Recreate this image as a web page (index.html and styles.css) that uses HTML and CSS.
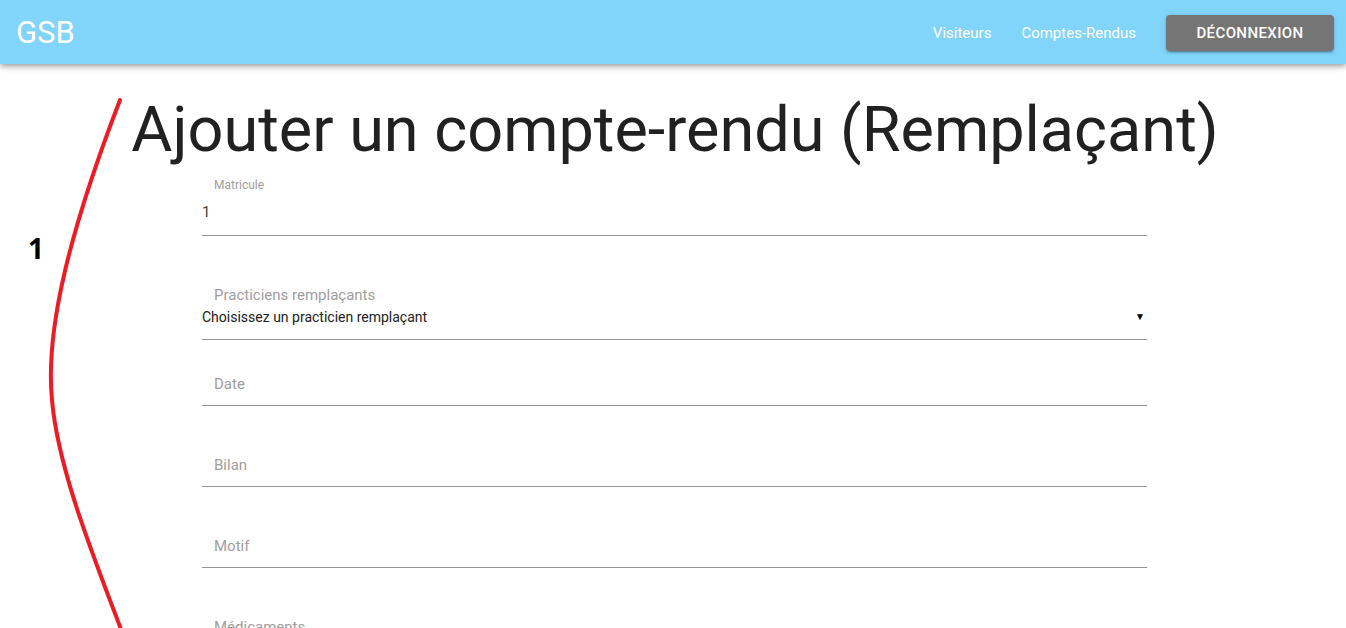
FILE: index.html
```html
<!DOCTYPE html>
<html lang="fr">
<head>
<meta charset="utf-8">
<title>GSB - Ajouter un compte-rendu</title>
<link rel="stylesheet" href="styles.css">
</head>
<body>
<header class="appbar">
  <div class="brand">GSB</div>
  <nav class="nav">
    <a class="nav-link" href="#">Visiteurs</a>
    <a class="nav-link" href="#">Comptes-Rendus</a>
    <button class="logout" type="button">Déconnexion</button>
  </nav>
</header>
<main class="page">
  <h1 class="title">Ajouter un compte-rendu (Remplaçant)</h1>
  <form class="form">
    <div class="field field--shrink">
      <label class="label label--small">Matricule</label>
      <div class="value">1</div>
    </div>
    <div class="field field--select">
      <label class="label">Practiciens remplaçants</label>
      <div class="select">
        <span>Choisissez un practicien remplaçant</span>
        <span class="arrow">▼</span>
      </div>
    </div>
    <div class="field field--text field--first">
      <label class="label">Date</label>
    </div>
    <div class="field field--text">
      <label class="label">Bilan</label>
    </div>
    <div class="field field--text">
      <label class="label">Motif</label>
    </div>
    <div class="field field--text">
      <label class="label">Médicaments</label>
    </div>
  </form>
</main>
<div class="annotation-num">1</div>
<svg class="annotation-curve" width="1346" height="628" viewBox="0 0 1346 628">
  <path d="M120,100 C70,230 45,330 52,400 C58,470 95,560 122,632" fill="none" stroke="#ed1c24" stroke-width="4" stroke-linecap="round"/>
</svg>
</body>
</html>
```

FILE: styles.css
```css
html, body {
  margin: 0;
  padding: 0;
  background: #ffffff;
  font-family: Roboto, "Liberation Sans", sans-serif;
  overflow: hidden;
  height: 628px;
}

.appbar {
  height: 64px;
  background: #81d4fa;
  display: flex;
  align-items: center;
  justify-content: space-between;
  padding: 0 12px 0 16px;
  box-shadow: 0 2px 4px -1px rgba(0,0,0,0.2), 0 4px 5px 0 rgba(0,0,0,0.14), 0 1px 10px 0 rgba(0,0,0,0.12);
  position: relative;
  z-index: 1;
}

.brand {
  color: #ffffff;
  font-size: 31px;
  font-weight: 400;
  line-height: 1;
}

.nav {
  display: flex;
  align-items: center;
  gap: 30px;
  padding-top: 2px;
}

.nav-link {
  color: #ffffff;
  text-decoration: none;
  font-size: 15px;
  font-weight: 400;
}

.logout {
  background: #757575;
  color: #ffffff;
  border: none;
  border-radius: 4px;
  height: 36px;
  width: 168px;
  padding: 0;
  font-family: Roboto, "Liberation Sans", sans-serif;
  font-size: 15px;
  font-weight: 500;
  letter-spacing: 0.4px;
  text-transform: uppercase;
  box-shadow: 0 3px 1px -2px rgba(0,0,0,0.2), 0 2px 2px 0 rgba(0,0,0,0.14), 0 1px 5px 0 rgba(0,0,0,0.12);
}

.page {
  display: flex;
  flex-direction: column;
}

.title {
  margin: 28px 0 0 0;
  padding-left: 4px;
  font-size: 63px;
  line-height: 76px;
  font-weight: 400;
  color: #212121;
  text-align: center;
}

.form {
  width: 945px;
  margin-left: 202px;
  display: flex;
  flex-direction: column;
}

.field {
  display: flex;
  flex-direction: column;
  border-bottom: 1px solid #959595;
}

.label {
  display: block;
  padding-left: 12px;
  color: #9e9e9e;
  font-size: 15px;
  line-height: 20px;
}

.label--small {
  font-size: 12px;
  line-height: 14px;
}

.field--shrink {
  padding: 10px 0 13px 0;
  height: 44px;
  gap: 10px;
}

.value {
  font-size: 15px;
  line-height: 20px;
  color: #4a4030;
}

.field--select {
  padding: 49px 0 13px 0;
  gap: 3px;
}

.select {
  display: flex;
  justify-content: space-between;
  align-items: center;
  font-size: 14px;
  line-height: 18px;
  color: #212121;
}

.arrow {
  font-size: 10px;
  padding-right: 2px;
  color: #000000;
}

.field--text {
  padding: 49px 0 11px 0;
}

.field--first {
  padding-top: 34px;
}

.annotation-num {
  position: absolute;
  left: 28px;
  top: 230px;
  font-family: "Open Sans", "DejaVu Sans", sans-serif;
  font-weight: 700;
  font-size: 28px;
  line-height: 36px;
  color: #000000;
}

.annotation-curve {
  position: absolute;
  left: 0;
  top: 0;
  pointer-events: none;
}
```
